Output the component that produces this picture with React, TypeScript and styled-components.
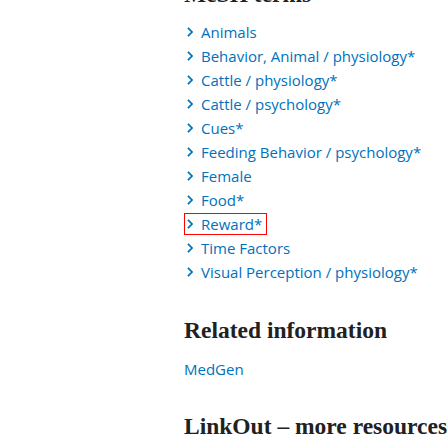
import React from "react";
import styled, { createGlobalStyle } from "styled-components";

const GlobalStyle = createGlobalStyle`
  html, body {
    margin: 0;
    padding: 0;
    background: #ffffff;
    overflow: hidden;
  }
  body {
    font-family: "Open Sans", "Noto Sans", sans-serif;
  }
`;

const Page = styled.main`
  display: flex;
  flex-direction: column;
  gap: 31px;
  margin-top: -20px;
  padding-left: 184px;
  width: 448px;
  box-sizing: border-box;
`;

const Section = styled.section`
  display: flex;
  flex-direction: column;
  gap: 12px;
`;

const Heading = styled.h2`
  margin: 0;
  font-family: "Liberation Serif", "Times New Roman", serif;
  font-weight: 700;
  font-size: 23.5px;
  line-height: 29px;
  color: #212121;
  white-space: nowrap;
`;

const TermList = styled.ul`
  list-style: none;
  margin: 0;
  padding: 0;
  display: flex;
  flex-direction: column;
`;

const TermItem = styled.li`
  height: 24px;
  display: flex;
  align-items: flex-start;
`;

const TermLink = styled.a<{ $focused?: boolean }>`
  box-sizing: border-box;
  height: 22px;
  display: inline-flex;
  align-items: center;
  gap: 8px;
  padding: 0 4px 0 2px;
  border: 1px solid ${(p) => (p.$focused ? "#ff0000" : "transparent")};
  color: #0071bc;
  text-decoration: none;
  font-family: "Open Sans", "Noto Sans", sans-serif;
  font-size: 15px;
  line-height: 20px;
  white-space: nowrap;
`;

const Chevron = styled.svg`
  flex: none;
  width: 6px;
  height: 10px;
`;

const PlainLink = styled.a`
  color: #0071bc;
  text-decoration: none;
  font-family: "Open Sans", "Noto Sans", sans-serif;
  font-size: 15px;
  line-height: 24px;
  display: block;
`;

const terms = [
  "Animals",
  "Behavior, Animal / physiology*",
  "Cattle / physiology*",
  "Cattle / psychology*",
  "Cues*",
  "Feeding Behavior / psychology*",
  "Female",
  "Food*",
  "Reward*",
  "Time Factors",
  "Visual Perception / physiology*",
];

const ChevronIcon = () => (
  <Chevron viewBox="0 0 6 10" aria-hidden="true">
    <polyline
      points="0.9,0.8 5,5 0.9,9.2"
      fill="none"
      stroke="#0071bc"
      strokeWidth="1.7"
    />
  </Chevron>
);

export default function App() {
  return (
    <>
      <GlobalStyle />
      <Page>
        <Section>
          <Heading>MeSH terms</Heading>
          <TermList>
            {terms.map((t) => (
              <TermItem key={t}>
                <TermLink href="#" $focused={t === "Reward*"}>
                  <ChevronIcon />
                  <span>{t}</span>
                </TermLink>
              </TermItem>
            ))}
          </TermList>
        </Section>
        <Section>
          <Heading>Related information</Heading>
          <PlainLink href="#">MedGen</PlainLink>
        </Section>
        <Section>
          <Heading>LinkOut – more resources</Heading>
        </Section>
      </Page>
    </>
  );
}
